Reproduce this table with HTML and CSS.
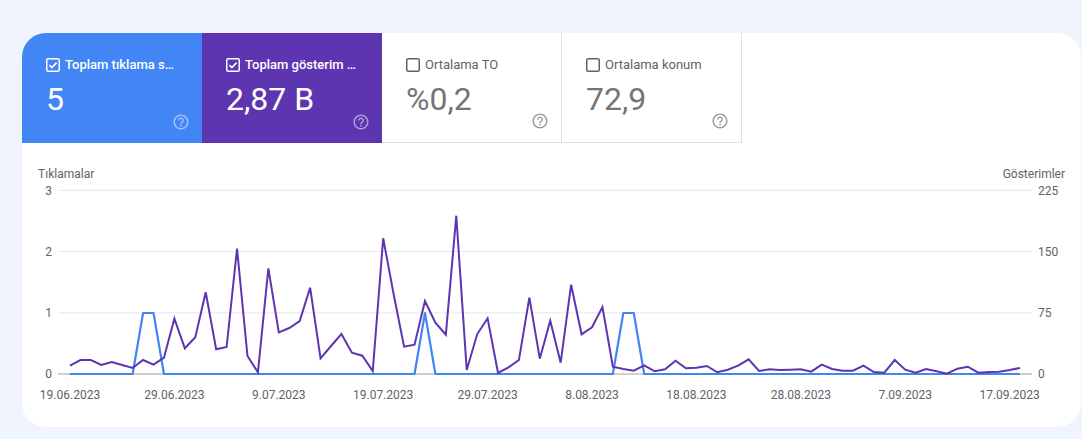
FILE: index.html
```html
<!DOCTYPE html>
<html lang="tr">
<head>
<meta charset="utf-8">
<title>Performans</title>
<link rel="stylesheet" href="styles.css">
</head>
<body>
<div class="card">
  <div class="tiles">
    <div class="tile tile-clicks">
      <div class="tile-label">
        <svg class="cb" viewBox="0 0 14 14"><rect x="0.75" y="0.75" width="12.5" height="12.5" rx="1.5"/><path class="tick" d="M3.4 7.1l2.5 2.5 4.7-5"/></svg>
        <span class="label-text" title="Toplam tıklama sayısı">Toplam tıklama s…</span>
      </div>
      <div class="tile-value">5</div>
      <svg class="help" viewBox="0 0 24 24"><path d="M11 18h2v-2h-2v2zm1-16C6.48 2 2 6.48 2 12s4.48 10 10 10 10-4.48 10-10S17.52 2 12 2zm0 18c-4.41 0-8-3.59-8-8s3.59-8 8-8 8 3.59 8 8-3.59 8-8 8zm0-14c-2.21 0-4 1.79-4 4h2c0-1.1.9-2 2-2s2 .9 2 2c0 2-3 1.75-3 5h2c0-2.25 3-2.5 3-5 0-2.21-1.79-4-4-4z"/></svg>
    </div>
    <div class="tile tile-impr">
      <div class="tile-label">
        <svg class="cb" viewBox="0 0 14 14"><rect x="0.75" y="0.75" width="12.5" height="12.5" rx="1.5"/><path class="tick" d="M3.4 7.1l2.5 2.5 4.7-5"/></svg>
        <span class="label-text" title="Toplam gösterim sayısı">Toplam gösterim …</span>
      </div>
      <div class="tile-value">2,87 B</div>
      <svg class="help" viewBox="0 0 24 24"><path d="M11 18h2v-2h-2v2zm1-16C6.48 2 2 6.48 2 12s4.48 10 10 10 10-4.48 10-10S17.52 2 12 2zm0 18c-4.41 0-8-3.59-8-8s3.59-8 8-8 8 3.59 8 8-3.59 8-8 8zm0-14c-2.21 0-4 1.79-4 4h2c0-1.1.9-2 2-2s2 .9 2 2c0 2-3 1.75-3 5h2c0-2.25 3-2.5 3-5 0-2.21-1.79-4-4-4z"/></svg>
    </div>
    <div class="tile tile-off">
      <div class="tile-label">
        <svg class="cb" viewBox="0 0 14 14"><rect x="0.75" y="0.75" width="12.5" height="12.5" rx="1.5"/></svg>
        <span class="label-text">Ortalama TO</span>
      </div>
      <div class="tile-value">%0,2</div>
      <svg class="help" viewBox="0 0 24 24"><path d="M11 18h2v-2h-2v2zm1-16C6.48 2 2 6.48 2 12s4.48 10 10 10 10-4.48 10-10S17.52 2 12 2zm0 18c-4.41 0-8-3.59-8-8s3.59-8 8-8 8 3.59 8 8-3.59 8-8 8zm0-14c-2.21 0-4 1.79-4 4h2c0-1.1.9-2 2-2s2 .9 2 2c0 2-3 1.75-3 5h2c0-2.25 3-2.5 3-5 0-2.21-1.79-4-4-4z"/></svg>
    </div>
    <div class="tile tile-off">
      <div class="tile-label">
        <svg class="cb" viewBox="0 0 14 14"><rect x="0.75" y="0.75" width="12.5" height="12.5" rx="1.5"/></svg>
        <span class="label-text">Ortalama konum</span>
      </div>
      <div class="tile-value">72,9</div>
      <svg class="help" viewBox="0 0 24 24"><path d="M11 18h2v-2h-2v2zm1-16C6.48 2 2 6.48 2 12s4.48 10 10 10 10-4.48 10-10S17.52 2 12 2zm0 18c-4.41 0-8-3.59-8-8s3.59-8 8-8 8 3.59 8 8-3.59 8-8 8zm0-14c-2.21 0-4 1.79-4 4h2c0-1.1.9-2 2-2s2 .9 2 2c0 2-3 1.75-3 5h2c0-2.25 3-2.5 3-5 0-2.21-1.79-4-4-4z"/></svg>
    </div>
  </div>

  <svg class="chart" viewBox="22 143 1059 284" width="1059" height="284">
    <g class="grid">
      <line x1="58" y1="190.4" x2="1032" y2="190.4"/>
      <line x1="58" y1="251.6" x2="1032" y2="251.6"/>
      <line x1="58" y1="312.8" x2="1032" y2="312.8"/>
    </g>
    <line class="axis" x1="58" y1="374" x2="1032" y2="374"/>

    <g class="txt">
      <text x="38" y="178">Tıklamalar</text>
      <text x="1065" y="178" text-anchor="end">Gösterimler</text>
      <text x="52" y="194.5" text-anchor="end">3</text>
      <text x="52" y="255.7" text-anchor="end">2</text>
      <text x="52" y="316.9" text-anchor="end">1</text>
      <text x="52" y="378.1" text-anchor="end">0</text>
      <text x="1038" y="194.5">225</text>
      <text x="1038" y="255.7">150</text>
      <text x="1038" y="316.9">75</text>
      <text x="1038" y="378.1">0</text>
      <text x="70" y="399" text-anchor="middle">19.06.2023</text>
      <text x="174.4" y="399" text-anchor="middle">29.06.2023</text>
      <text x="278.8" y="399" text-anchor="middle">9.07.2023</text>
      <text x="383.2" y="399" text-anchor="middle">19.07.2023</text>
      <text x="487.6" y="399" text-anchor="middle">29.07.2023</text>
      <text x="592" y="399" text-anchor="middle">8.08.2023</text>
      <text x="696.4" y="399" text-anchor="middle">18.08.2023</text>
      <text x="800.8" y="399" text-anchor="middle">28.08.2023</text>
      <text x="905.2" y="399" text-anchor="middle">7.09.2023</text>
      <text x="1009.6" y="399" text-anchor="middle">17.09.2023</text>
    </g>

    <polyline class="line-clicks" points="70,374 132.64,374 143.08,313 153.52,313 163.96,374 414.52,374 424.96,313 435.4,374 612.88,374 623.32,313 633.76,313 644.2,374 1020.04,374"/>

    <polyline class="line-impr" points="70,365.7 80.44,360 90.88,360 101.32,365 111.76,362 122.2,365 132.64,368 143.08,360 153.52,364.7 163.96,357.7 174.4,318.7 184.84,348.3 195.28,337.3 205.72,292.3 216.16,349.3 226.6,347 237.04,248.7 247.48,356 257.92,372.3 268.36,268.3 278.8,332.3 289.24,328 299.68,321 310.12,287.7 320.56,358.3 331,346 341.44,334 351.88,352.7 362.32,355.7 372.76,371 383.2,238.3 393.64,294.3 404.08,346.7 414.52,344.7 424.96,301 435.4,322.7 445.84,334.7 456.28,215.7 466.72,370 477.16,334.3 487.6,318.3 498.04,373 508.48,367.3 518.92,360 529.36,297.7 539.8,358.7 550.24,320.7 560.68,362.7 571.12,284.7 581.56,334.3 592,327.3 602.44,307 612.88,366.7 623.32,369 633.76,370.7 644.2,365.3 654.64,371.3 665.08,369.3 675.52,360.7 685.96,368.3 696.4,367.7 706.84,366 717.28,372.3 727.72,369.7 738.16,365.7 748.6,359.3 759.04,371 769.48,369.3 779.92,370 790.36,369.7 800.8,369.3 811.24,371.7 821.68,364.7 832.12,369 842.56,370.7 853,370.7 863.44,365.7 873.88,372 884.32,372.7 894.76,360 905.2,369.7 915.64,372.7 926.08,369 936.52,371.3 946.96,373.7 957.4,368.7 967.84,366.7 978.28,372.7 988.72,372 999.16,371.7 1009.6,370 1020.04,368"/>
  </svg>
</div>
</body>
</html>
```

FILE: styles.css
```css
html, body {
  margin: 0;
  padding: 0;
}

body {
  background: #f0f4fc;
  font-family: Roboto, "Noto Sans", "Liberation Sans", Arial, sans-serif;
  width: 1082px;
  height: 439px;
  overflow: hidden;
}

.card {
  margin: 33px 1px 0 22px;
  width: 1059px;
  height: 394px;
  background: #ffffff;
  border-radius: 24px;
  overflow: hidden;
}

.tiles {
  display: flex;
  height: 110px;
}

.tile {
  position: relative;
  box-sizing: border-box;
  width: 180px;
  height: 110px;
  padding: 24px 12px 0 24px;
  display: flex;
  flex-direction: column;
}

.tile-clicks {
  background: #4285f4;
  color: #ffffff;
}

.tile-impr {
  background: #5e35b1;
  color: #ffffff;
}

.tile-off {
  background: #ffffff;
  border-right: 1px solid #e0e0e0;
  border-bottom: 1px solid #e0e0e0;
}

.tile-label {
  display: flex;
  align-items: center;
  height: 16px;
  gap: 5px;
}

.cb {
  flex: none;
  width: 14px;
  height: 14px;
}

.cb rect {
  fill: none;
  stroke-width: 1.5;
}

.tile-clicks .cb rect,
.tile-impr .cb rect {
  stroke: #ffffff;
}

.tile-off .cb rect {
  stroke: #5f6368;
}

.cb .tick {
  fill: none;
  stroke: #ffffff;
  stroke-width: 1.6;
}

.label-text {
  font-size: 13px;
  line-height: 16px;
  white-space: nowrap;
}

.tile-clicks .label-text,
.tile-impr .label-text {
  font-weight: 500;
}

.tile-off .label-text {
  color: #5f6368;
  font-weight: 400;
}

.tile-value {
  margin-top: 10px;
  font-size: 32px;
  line-height: 32px;
  font-weight: 400;
}

.tile-off .tile-value {
  color: #757575;
}

.help {
  position: absolute;
  right: 12px;
  bottom: 12px;
  width: 18px;
  height: 18px;
}

.tile-clicks .help path,
.tile-impr .help path {
  fill: rgba(255, 255, 255, 0.5);
}

.tile-off .help path {
  fill: #9e9e9e;
}

.chart {
  display: block;
}

.grid line {
  stroke: #e8e8e8;
  stroke-width: 1;
}

.axis {
  stroke: #9e9e9e;
  stroke-width: 1;
}

.txt text {
  font-family: Roboto, "Noto Sans", "Liberation Sans", Arial, sans-serif;
  font-size: 12px;
  fill: #5f6368;
}

.line-clicks {
  fill: none;
  stroke: #4285f4;
  stroke-width: 2.2;
  stroke-linejoin: round;
}

.line-impr {
  fill: none;
  stroke: #5e35b1;
  stroke-width: 2;
  stroke-linejoin: miter;
}
```
